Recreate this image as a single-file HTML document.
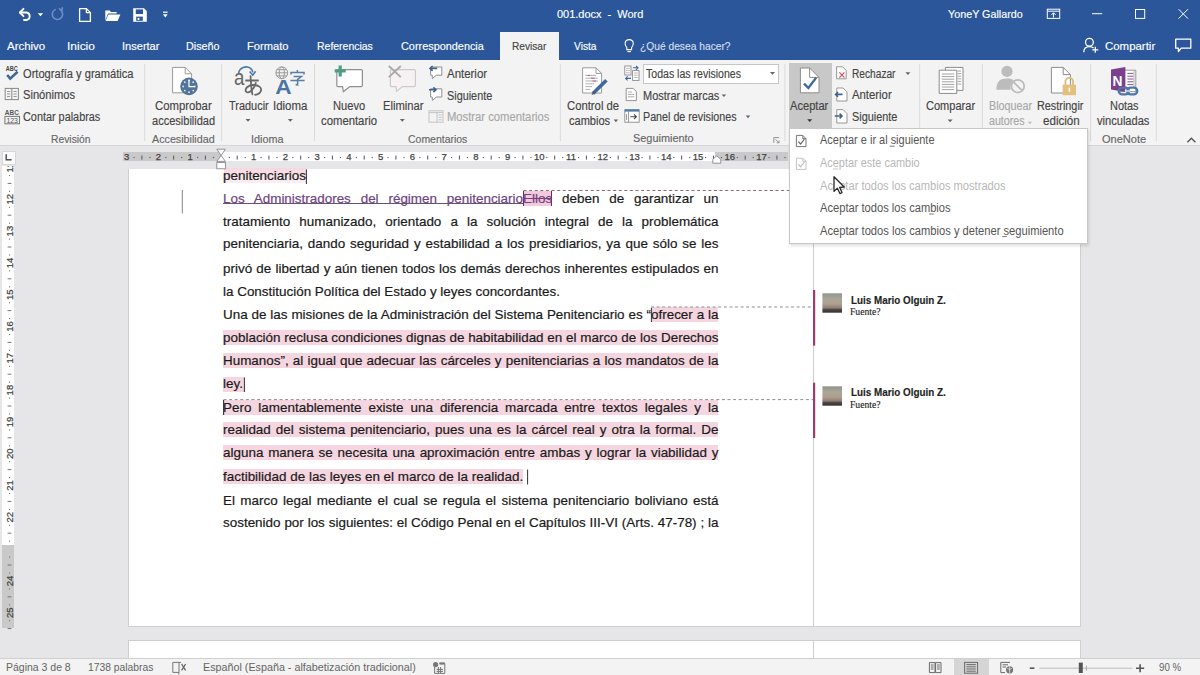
<!DOCTYPE html>
<html><head><meta charset="utf-8">
<style>
*{margin:0;padding:0;box-sizing:border-box}
html,body{width:1200px;height:675px;overflow:hidden;background:#e6e5e8;font-family:"Liberation Sans",sans-serif}
.a{position:absolute;white-space:pre;transform-origin:0 0;-webkit-text-stroke:0.15px currentColor}
.bx{position:absolute}
.ln{position:absolute;left:223px;width:495.5px;white-space:nowrap;font-size:13.45px;line-height:18px;color:#1a1a1a;-webkit-text-stroke:0.2px #1a1a1a}
.j{text-align:justify;text-align-last:justify}
.pk{position:absolute;background:#f5d6e0}
svg.full{position:absolute;left:0;top:0;width:1200px;height:675px}
</style></head><body>
<!-- backgrounds -->
<div class="bx" style="left:0;top:0;width:1200px;height:60px;background:#2b579a"></div>
<div class="bx" style="left:500px;top:32px;width:59px;height:28px;background:#f3f3f3"></div>
<div class="bx" style="left:0;top:60px;width:1200px;height:86px;background:#f3f3f3;border-bottom:1px solid #d6d6d6"></div>
<div class="bx" style="left:788.6px;top:63px;width:43.2px;height:65px;background:#c8c8c8"></div>
<div class="bx" style="left:642.7px;top:63.5px;width:136.5px;height:20.4px;background:#fff;border:1px solid #c6c6c6"></div>
<!-- page -->
<div class="bx" style="left:127.5px;top:168.5px;width:953px;height:458px;background:#fff;border:1px solid #cfcfcf;border-top:none"></div>
<div class="bx" style="left:127.5px;top:639.5px;width:953px;height:20px;background:#fff;border:1px solid #cfcfcf"></div>
<div class="bx" style="left:813px;top:168.5px;width:1px;height:457px;background:#cdcdcd"></div>
<div class="bx" style="left:813px;top:640px;width:1px;height:18px;background:#cdcdcd"></div>
<!-- rulers -->
<div class="bx" style="left:123px;top:152px;width:665px;height:9px;background:#c9c9c9"></div>
<div class="bx" style="left:221px;top:152px;width:494px;height:9px;background:#fff"></div>
<div class="bx" style="left:1.5px;top:150.5px;width:14px;height:14px;background:#fafafa;border:1px solid #d8d8d8"></div>
<div class="bx" style="left:2px;top:166px;width:11.5px;height:462px;background:#c9c9c9"></div>
<div class="bx" style="left:2px;top:166px;width:11.5px;height:379px;background:#fff"></div>
<!-- status -->
<div class="bx" style="left:0;top:658px;width:1200px;height:17px;background:#f3f3f3;border-top:1px solid #cfcfcf"></div>
<div class="bx" style="left:953.5px;top:659px;width:35px;height:16px;background:#d5d5d5"></div>

<div class="pk" style="left:224px;top:168.0px;width:82.5px;height:15px;background:linear-gradient(#f6d7e0,#fbeff3)"></div>
<div class="pk" style="left:651px;top:307.0px;width:67px;height:15px"></div>
<div class="pk" style="left:223px;top:330.0px;width:495px;height:15px"></div>
<div class="pk" style="left:223px;top:353.0px;width:495px;height:15px"></div>
<div class="pk" style="left:223px;top:376.5px;width:21.5px;height:15px"></div>
<div class="pk" style="left:223px;top:400.0px;width:495px;height:15px"></div>
<div class="pk" style="left:223px;top:422.0px;width:495px;height:15px"></div>
<div class="pk" style="left:223px;top:445.0px;width:495px;height:15px"></div>
<div class="pk" style="left:223px;top:469.0px;width:300px;height:15px"></div>
<div class="ln" style="top:166.84px">penitenciarios</div>
<div class="ln j" style="top:189.84px"><span style="color:#6e4580;-webkit-text-stroke-color:#6e4580;text-decoration:underline;text-decoration-color:#6a5078;text-decoration-skip-ink:none;text-underline-offset:0px">Los Administradores del régimen penitenciario</span><span style="color:#6e4580;-webkit-text-stroke-color:#6e4580;text-decoration:line-through;text-decoration-color:#7a3d7c;background:#f3c9dc;box-shadow:inset 1px 0 0 #6a2a5c,inset -1px 0 0 #6a2a5c">Ellos</span> deben de garantizar un</div>
<div class="ln j" style="top:212.84px">tratamiento humanizado, orientado a la solución integral de la problemática</div>
<div class="ln j" style="top:235.34px">penitenciaria, dando seguridad y estabilidad a los presidiarios, ya que sólo se les</div>
<div class="ln j" style="top:259.84px">privó de libertad y aún tienen todos los demás derechos inherentes estipulados en</div>
<div class="ln" style="top:282.84px">la Constitución Política del Estado y leyes concordantes.</div>
<div class="ln j" style="top:305.84px">Una de las misiones de la Administración del Sistema Penitenciario es “ofrecer a la</div>
<div class="ln j" style="top:328.84px">población reclusa condiciones dignas de habitabilidad en el marco de los Derechos</div>
<div class="ln j" style="top:351.84px">Humanos”, al igual que adecuar las cárceles y penitenciarias a los mandatos de la</div>
<div class="ln" style="top:375.34px">ley.</div>
<div class="ln j" style="top:398.84px">Pero lamentablemente existe una diferencia marcada entre textos legales y la</div>
<div class="ln j" style="top:420.84px">realidad del sistema penitenciario, pues una es la cárcel real y otra la formal. De</div>
<div class="ln j" style="top:443.84px">alguna manera se necesita una aproximación entre ambas y lograr la viabilidad y</div>
<div class="ln" style="top:467.84px">factibilidad de las leyes en el marco de la realidad. </div>
<div class="ln j" style="top:491.84px">El marco legal mediante el cual se regula el sistema penitenciario boliviano está</div>
<div class="ln j" style="top:514.34px">sostenido por los siguientes: el Código Penal en el Capítulos III-VI (Arts. 47-78) ; la</div>
<svg class="full" viewBox="0 0 1200 675">
<text x="126.55" y="160" font-family="Liberation Sans" font-size="9.5" fill="#444" stroke="#444" stroke-width="0.25" text-anchor="middle">3</text>
<text x="158.30" y="160" font-family="Liberation Sans" font-size="9.5" fill="#444" stroke="#444" stroke-width="0.25" text-anchor="middle">2</text>
<text x="190.05" y="160" font-family="Liberation Sans" font-size="9.5" fill="#444" stroke="#444" stroke-width="0.25" text-anchor="middle">1</text>
<text x="253.55" y="160" font-family="Liberation Sans" font-size="9.5" fill="#444" stroke="#444" stroke-width="0.25" text-anchor="middle">1</text>
<text x="285.30" y="160" font-family="Liberation Sans" font-size="9.5" fill="#444" stroke="#444" stroke-width="0.25" text-anchor="middle">2</text>
<text x="317.05" y="160" font-family="Liberation Sans" font-size="9.5" fill="#444" stroke="#444" stroke-width="0.25" text-anchor="middle">3</text>
<text x="348.80" y="160" font-family="Liberation Sans" font-size="9.5" fill="#444" stroke="#444" stroke-width="0.25" text-anchor="middle">4</text>
<text x="380.55" y="160" font-family="Liberation Sans" font-size="9.5" fill="#444" stroke="#444" stroke-width="0.25" text-anchor="middle">5</text>
<text x="412.30" y="160" font-family="Liberation Sans" font-size="9.5" fill="#444" stroke="#444" stroke-width="0.25" text-anchor="middle">6</text>
<text x="444.05" y="160" font-family="Liberation Sans" font-size="9.5" fill="#444" stroke="#444" stroke-width="0.25" text-anchor="middle">7</text>
<text x="475.80" y="160" font-family="Liberation Sans" font-size="9.5" fill="#444" stroke="#444" stroke-width="0.25" text-anchor="middle">8</text>
<text x="507.55" y="160" font-family="Liberation Sans" font-size="9.5" fill="#444" stroke="#444" stroke-width="0.25" text-anchor="middle">9</text>
<text x="539.30" y="160" font-family="Liberation Sans" font-size="9.5" fill="#444" stroke="#444" stroke-width="0.25" text-anchor="middle">10</text>
<text x="571.05" y="160" font-family="Liberation Sans" font-size="9.5" fill="#444" stroke="#444" stroke-width="0.25" text-anchor="middle">11</text>
<text x="602.80" y="160" font-family="Liberation Sans" font-size="9.5" fill="#444" stroke="#444" stroke-width="0.25" text-anchor="middle">12</text>
<text x="634.55" y="160" font-family="Liberation Sans" font-size="9.5" fill="#444" stroke="#444" stroke-width="0.25" text-anchor="middle">13</text>
<text x="666.30" y="160" font-family="Liberation Sans" font-size="9.5" fill="#444" stroke="#444" stroke-width="0.25" text-anchor="middle">14</text>
<text x="698.05" y="160" font-family="Liberation Sans" font-size="9.5" fill="#444" stroke="#444" stroke-width="0.25" text-anchor="middle">15</text>
<text x="729.80" y="160" font-family="Liberation Sans" font-size="9.5" fill="#444" stroke="#444" stroke-width="0.25" text-anchor="middle">16</text>
<text x="761.55" y="160" font-family="Liberation Sans" font-size="9.5" fill="#444" stroke="#444" stroke-width="0.25" text-anchor="middle">17</text>
<rect x="133.49" y="156.9" width="1.2" height="1.2" fill="#666"/>
<path d="M141.92 155.6 V159.6" stroke="#555" stroke-width="1"/>
<rect x="149.36" y="156.9" width="1.2" height="1.2" fill="#666"/>
<rect x="165.24" y="156.9" width="1.2" height="1.2" fill="#666"/>
<path d="M173.68 155.6 V159.6" stroke="#555" stroke-width="1"/>
<rect x="181.11" y="156.9" width="1.2" height="1.2" fill="#666"/>
<rect x="196.99" y="156.9" width="1.2" height="1.2" fill="#666"/>
<path d="M205.42 155.6 V159.6" stroke="#555" stroke-width="1"/>
<rect x="212.86" y="156.9" width="1.2" height="1.2" fill="#666"/>
<rect x="228.74" y="156.9" width="1.2" height="1.2" fill="#666"/>
<path d="M237.18 155.6 V159.6" stroke="#555" stroke-width="1"/>
<rect x="244.61" y="156.9" width="1.2" height="1.2" fill="#666"/>
<rect x="260.49" y="156.9" width="1.2" height="1.2" fill="#666"/>
<path d="M268.92 155.6 V159.6" stroke="#555" stroke-width="1"/>
<rect x="276.36" y="156.9" width="1.2" height="1.2" fill="#666"/>
<rect x="292.24" y="156.9" width="1.2" height="1.2" fill="#666"/>
<path d="M300.68 155.6 V159.6" stroke="#555" stroke-width="1"/>
<rect x="308.11" y="156.9" width="1.2" height="1.2" fill="#666"/>
<rect x="323.99" y="156.9" width="1.2" height="1.2" fill="#666"/>
<path d="M332.42 155.6 V159.6" stroke="#555" stroke-width="1"/>
<rect x="339.86" y="156.9" width="1.2" height="1.2" fill="#666"/>
<rect x="355.74" y="156.9" width="1.2" height="1.2" fill="#666"/>
<path d="M364.18 155.6 V159.6" stroke="#555" stroke-width="1"/>
<rect x="371.61" y="156.9" width="1.2" height="1.2" fill="#666"/>
<rect x="387.49" y="156.9" width="1.2" height="1.2" fill="#666"/>
<path d="M395.92 155.6 V159.6" stroke="#555" stroke-width="1"/>
<rect x="403.36" y="156.9" width="1.2" height="1.2" fill="#666"/>
<rect x="419.24" y="156.9" width="1.2" height="1.2" fill="#666"/>
<path d="M427.68 155.6 V159.6" stroke="#555" stroke-width="1"/>
<rect x="435.11" y="156.9" width="1.2" height="1.2" fill="#666"/>
<rect x="450.99" y="156.9" width="1.2" height="1.2" fill="#666"/>
<path d="M459.42 155.6 V159.6" stroke="#555" stroke-width="1"/>
<rect x="466.86" y="156.9" width="1.2" height="1.2" fill="#666"/>
<rect x="482.74" y="156.9" width="1.2" height="1.2" fill="#666"/>
<path d="M491.18 155.6 V159.6" stroke="#555" stroke-width="1"/>
<rect x="498.61" y="156.9" width="1.2" height="1.2" fill="#666"/>
<rect x="514.49" y="156.9" width="1.2" height="1.2" fill="#666"/>
<path d="M522.92 155.6 V159.6" stroke="#555" stroke-width="1"/>
<rect x="530.36" y="156.9" width="1.2" height="1.2" fill="#666"/>
<rect x="546.24" y="156.9" width="1.2" height="1.2" fill="#666"/>
<path d="M554.68 155.6 V159.6" stroke="#555" stroke-width="1"/>
<rect x="562.11" y="156.9" width="1.2" height="1.2" fill="#666"/>
<rect x="577.99" y="156.9" width="1.2" height="1.2" fill="#666"/>
<path d="M586.42 155.6 V159.6" stroke="#555" stroke-width="1"/>
<rect x="593.86" y="156.9" width="1.2" height="1.2" fill="#666"/>
<rect x="609.74" y="156.9" width="1.2" height="1.2" fill="#666"/>
<path d="M618.18 155.6 V159.6" stroke="#555" stroke-width="1"/>
<rect x="625.61" y="156.9" width="1.2" height="1.2" fill="#666"/>
<rect x="641.49" y="156.9" width="1.2" height="1.2" fill="#666"/>
<path d="M649.92 155.6 V159.6" stroke="#555" stroke-width="1"/>
<rect x="657.36" y="156.9" width="1.2" height="1.2" fill="#666"/>
<rect x="673.24" y="156.9" width="1.2" height="1.2" fill="#666"/>
<path d="M681.68 155.6 V159.6" stroke="#555" stroke-width="1"/>
<rect x="689.11" y="156.9" width="1.2" height="1.2" fill="#666"/>
<rect x="704.99" y="156.9" width="1.2" height="1.2" fill="#666"/>
<path d="M713.42 155.6 V159.6" stroke="#555" stroke-width="1"/>
<rect x="720.86" y="156.9" width="1.2" height="1.2" fill="#666"/>
<rect x="736.74" y="156.9" width="1.2" height="1.2" fill="#666"/>
<path d="M745.18 155.6 V159.6" stroke="#555" stroke-width="1"/>
<rect x="752.61" y="156.9" width="1.2" height="1.2" fill="#666"/>
<rect x="768.49" y="156.9" width="1.2" height="1.2" fill="#666"/>
<path d="M776.92 155.6 V159.6" stroke="#555" stroke-width="1"/>
<rect x="784.36" y="156.9" width="1.2" height="1.2" fill="#666"/>
<path d="M216.8 149.2 H225.4 L221.1 155.4 Z M216.8 161.4 H225.4 L221.1 155.4 Z" fill="#fff" stroke="#8a8a8a" stroke-width="0.9"/>
<rect x="216.8" y="162.6" width="8.6" height="6.2" fill="#fff" stroke="#8a8a8a" stroke-width="0.9"/>
<path d="M712.8 163.2 H720.8 V159.4 L716.8 155.8 L712.8 159.4 Z" fill="#fff" stroke="#8a8a8a" stroke-width="0.9"/>
<text x="0" y="0" transform="translate(12.7 199.30) rotate(-90)" font-family="Liberation Sans" font-size="9.5" fill="#444" stroke="#444" stroke-width="0.25" text-anchor="middle">12</text>
<text x="0" y="0" transform="translate(12.7 231.10) rotate(-90)" font-family="Liberation Sans" font-size="9.5" fill="#444" stroke="#444" stroke-width="0.25" text-anchor="middle">13</text>
<text x="0" y="0" transform="translate(12.7 262.90) rotate(-90)" font-family="Liberation Sans" font-size="9.5" fill="#444" stroke="#444" stroke-width="0.25" text-anchor="middle">14</text>
<text x="0" y="0" transform="translate(12.7 294.70) rotate(-90)" font-family="Liberation Sans" font-size="9.5" fill="#444" stroke="#444" stroke-width="0.25" text-anchor="middle">15</text>
<text x="0" y="0" transform="translate(12.7 326.50) rotate(-90)" font-family="Liberation Sans" font-size="9.5" fill="#444" stroke="#444" stroke-width="0.25" text-anchor="middle">16</text>
<text x="0" y="0" transform="translate(12.7 358.30) rotate(-90)" font-family="Liberation Sans" font-size="9.5" fill="#444" stroke="#444" stroke-width="0.25" text-anchor="middle">17</text>
<text x="0" y="0" transform="translate(12.7 390.10) rotate(-90)" font-family="Liberation Sans" font-size="9.5" fill="#444" stroke="#444" stroke-width="0.25" text-anchor="middle">18</text>
<text x="0" y="0" transform="translate(12.7 421.90) rotate(-90)" font-family="Liberation Sans" font-size="9.5" fill="#444" stroke="#444" stroke-width="0.25" text-anchor="middle">19</text>
<text x="0" y="0" transform="translate(12.7 453.70) rotate(-90)" font-family="Liberation Sans" font-size="9.5" fill="#444" stroke="#444" stroke-width="0.25" text-anchor="middle">20</text>
<text x="0" y="0" transform="translate(12.7 485.50) rotate(-90)" font-family="Liberation Sans" font-size="9.5" fill="#444" stroke="#444" stroke-width="0.25" text-anchor="middle">21</text>
<text x="0" y="0" transform="translate(12.7 517.30) rotate(-90)" font-family="Liberation Sans" font-size="9.5" fill="#444" stroke="#444" stroke-width="0.25" text-anchor="middle">22</text>

<text x="0" y="0" transform="translate(12.7 580.90) rotate(-90)" font-family="Liberation Sans" font-size="9.5" fill="#444" stroke="#444" stroke-width="0.25" text-anchor="middle">24</text>
<text x="0" y="0" transform="translate(12.7 612.70) rotate(-90)" font-family="Liberation Sans" font-size="9.5" fill="#444" stroke="#444" stroke-width="0.25" text-anchor="middle">25</text>
<rect x="9" y="174.95" width="1.1" height="1.1" fill="#777"/>
<path d="M7.6 183.40 H11.4" stroke="#777" stroke-width="1"/>
<rect x="9" y="190.85" width="1.1" height="1.1" fill="#777"/>
<rect x="9" y="206.75" width="1.1" height="1.1" fill="#777"/>
<path d="M7.6 215.20 H11.4" stroke="#777" stroke-width="1"/>
<rect x="9" y="222.65" width="1.1" height="1.1" fill="#777"/>
<rect x="9" y="238.55" width="1.1" height="1.1" fill="#777"/>
<path d="M7.6 247.00 H11.4" stroke="#777" stroke-width="1"/>
<rect x="9" y="254.45" width="1.1" height="1.1" fill="#777"/>
<rect x="9" y="270.35" width="1.1" height="1.1" fill="#777"/>
<path d="M7.6 278.80 H11.4" stroke="#777" stroke-width="1"/>
<rect x="9" y="286.25" width="1.1" height="1.1" fill="#777"/>
<rect x="9" y="302.15" width="1.1" height="1.1" fill="#777"/>
<path d="M7.6 310.60 H11.4" stroke="#777" stroke-width="1"/>
<rect x="9" y="318.05" width="1.1" height="1.1" fill="#777"/>
<rect x="9" y="333.95" width="1.1" height="1.1" fill="#777"/>
<path d="M7.6 342.40 H11.4" stroke="#777" stroke-width="1"/>
<rect x="9" y="349.85" width="1.1" height="1.1" fill="#777"/>
<rect x="9" y="365.75" width="1.1" height="1.1" fill="#777"/>
<path d="M7.6 374.20 H11.4" stroke="#777" stroke-width="1"/>
<rect x="9" y="381.65" width="1.1" height="1.1" fill="#777"/>
<rect x="9" y="397.55" width="1.1" height="1.1" fill="#777"/>
<path d="M7.6 406.00 H11.4" stroke="#777" stroke-width="1"/>
<rect x="9" y="413.45" width="1.1" height="1.1" fill="#777"/>
<rect x="9" y="429.35" width="1.1" height="1.1" fill="#777"/>
<path d="M7.6 437.80 H11.4" stroke="#777" stroke-width="1"/>
<rect x="9" y="445.25" width="1.1" height="1.1" fill="#777"/>
<rect x="9" y="461.15" width="1.1" height="1.1" fill="#777"/>
<path d="M7.6 469.60 H11.4" stroke="#777" stroke-width="1"/>
<rect x="9" y="477.05" width="1.1" height="1.1" fill="#777"/>
<rect x="9" y="492.95" width="1.1" height="1.1" fill="#777"/>
<path d="M7.6 501.40 H11.4" stroke="#777" stroke-width="1"/>
<rect x="9" y="508.85" width="1.1" height="1.1" fill="#777"/>
<rect x="9" y="524.75" width="1.1" height="1.1" fill="#777"/>
<path d="M7.6 533.20 H11.4" stroke="#777" stroke-width="1"/>
<rect x="9" y="540.65" width="1.1" height="1.1" fill="#777"/>
<rect x="9" y="556.55" width="1.1" height="1.1" fill="#777"/>
<path d="M7.6 565.00 H11.4" stroke="#777" stroke-width="1"/>
<rect x="9" y="572.45" width="1.1" height="1.1" fill="#777"/>
<rect x="9" y="588.35" width="1.1" height="1.1" fill="#777"/>
<path d="M7.6 596.80 H11.4" stroke="#777" stroke-width="1"/>
<rect x="9" y="604.25" width="1.1" height="1.1" fill="#777"/>
<rect x="9" y="620.15" width="1.1" height="1.1" fill="#777"/>
<path d="M7.6 628.60 H11.4" stroke="#777" stroke-width="1"/>
<path d="M6.2 154.2 V159.8 H11.6" fill="none" stroke="#555" stroke-width="1.5"/>
<path d="M182.3 190 V213.5" stroke="#888" stroke-width="1"/>
<path d="M523.5 190.5 H813" stroke="#8a6a78" stroke-width="1" stroke-dasharray="3 2.6"/>
<path d="M651 307 H813" stroke="#8f8f8f" stroke-width="1" stroke-dasharray="3 2.6"/>
<path d="M223.5 399.6 H813" stroke="#8f8f8f" stroke-width="1" stroke-dasharray="3 2.6"/>
<path d="M306.4 169.5 V184" stroke="#333" stroke-width="1"/>
<path d="M244.4 377.5 V392" stroke="#333" stroke-width="1"/>
<path d="M223.6 400 V415" stroke="#333" stroke-width="1.1"/>
<path d="M651.4 308 V322" stroke="#333" stroke-width="1"/>
<path d="M527.6 469.5 V484.5" stroke="#333" stroke-width="1"/>
<rect x="813" y="290" width="2.2" height="55.6" fill="#a7386a"/>
<rect x="813" y="382.7" width="2.2" height="55.3" fill="#a7386a"/>
<defs><linearGradient id="av" x1="0" y1="0" x2="0" y2="1"><stop offset="0" stop-color="#8f958a"/><stop offset="0.3" stop-color="#a9a79a"/><stop offset="0.55" stop-color="#b29f8c"/><stop offset="0.75" stop-color="#8c8078"/><stop offset="0.85" stop-color="#4a4040"/><stop offset="1" stop-color="#3a3434"/></linearGradient></defs>
<rect x="822.4" y="293.3" width="19.6" height="19.4" fill="url(#av)"/>
<rect x="822.4" y="386.3" width="19.6" height="19.4" fill="url(#av)"/>
<g fill="none" stroke="#777" stroke-width="1"><path d="M172.8 662.4 H179 V672.4 H172.8 Z M179 662.4 H181"/><path d="M181.6 664 L185.6 670.4 M185.6 664 L181.6 670.4" stroke="#666" stroke-width="1.3"/><path d="M178.8 672.4 V674.6" /></g>
<circle cx="435.6" cy="664.6" r="2.6" fill="#777"/>
<g fill="none" stroke="#777" stroke-width="1"><path d="M434.6 667 V673.4 H444.8 V663.4 H439.4"/><path d="M436.6 669.4 H443 M436.6 671.4 H443 M438.4 667 V673 M440.6 667 V673"/></g>
<rect x="439.6" y="662.4" width="5" height="2.2" fill="#777"/>
<g fill="none" stroke="#6a6a6a" stroke-width="1"><path d="M929.4 662.6 H935 V672.6 H929.4 Z M935.6 662.6 H941 V672.6 H935.6 Z"/><path d="M930.8 665 H933.6 M930.8 667 H933.6 M930.8 669 H933.6 M937 665 H939.8 M937 667 H939.8 M937 669 H939.8"/><rect x="964.6" y="662.4" width="13" height="10.8"/><path d="M966.4 664.6 H975.8 M966.4 666.8 H975.8 M966.4 669 H975.8 M966.4 671.2 H975.8"/><path d="M1010 662.4 H1000.8 V672.6 H1005"/><path d="M1002.6 664.8 H1008 M1002.6 667 H1006"/></g>
<circle cx="1009.6" cy="669.8" r="3.6" fill="#777"/><path d="M1007.4 668.4 Q1009.6 670.4 1011.8 668.4 M1009.6 666.4 V673.2" stroke="#eee" stroke-width="0.7" fill="none"/>
<path d="M1029.8 668.2 H1034.4" stroke="#555" stroke-width="1.6"/>
<path d="M1039.4 668.2 H1132.2" stroke="#bbb" stroke-width="1"/>
<path d="M1086.4 665.6 V670.8" stroke="#aaa" stroke-width="1"/>
<rect x="1078.8" y="662.6" width="4" height="10.4" fill="#555"/>
<path d="M1136 668.2 H1144.2 M1140.1 664.2 V672.2" stroke="#555" stroke-width="1.6"/>
<defs><clipPath id="vr"><rect x="0" y="166" width="20" height="470"/></clipPath></defs><g clip-path="url(#vr)"><text x="0" y="0" transform="translate(12.7 167.50) rotate(-90)" font-family="Liberation Sans" font-size="9.5" fill="#444" stroke="#444" stroke-width="0.25" text-anchor="middle">11</text></g>
</svg>

<svg class="full" viewBox="0 0 1200 675">
<!-- ===== title bar icons ===== -->
<g fill="none" stroke="#fff" stroke-width="1.8" stroke-linecap="round" stroke-linejoin="round">
  <path d="M20 12.5 H26.5 A3.8 3.8 0 0 1 26.5 20 H24"/>
  <path d="M23.5 8.8 L19.8 12.5 L23.5 16.2"/>
</g>
<path d="M37.8 13.3 H43.2 L40.5 16.3 Z" fill="#fff"/>
<g fill="none" stroke="#6b8cc4" stroke-width="1.6" stroke-linecap="round">
  <path d="M55.2 9.6 A5.2 5.2 0 1 0 61.6 11.2"/>
  <path d="M59.4 8.5 L61.8 11.2 L62.4 7.8"/>
</g>
<g fill="none" stroke="#fff" stroke-width="1.3" stroke-linejoin="round">
  <path d="M79.6 8.6 H86.4 L90.4 12.6 V21.4 H79.6 Z"/>
  <path d="M86.4 8.6 V12.6 H90.4"/>
</g>
<path d="M133.2 8.2 H144 L146.8 11 V21.8 H133.2 Z" fill="#fff"/>
<path d="M105.3 10.4 H109.6 L111 12 H116.6 V13.6 H108 L105.3 20.5 Z" fill="#fff"/>
<path d="M108.4 14.6 H120.4 L117.6 21 H105.6 Z" fill="#fff"/>
<rect x="135.8" y="9.4" width="7.2" height="4.6" fill="#2b579a"/>
<rect x="136.2" y="16.6" width="6.6" height="4.2" fill="#2b579a"/>
<rect x="137.6" y="17.8" width="1.8" height="2.2" fill="#fff"/>
<path d="M163 12.2 H167.6" stroke="#fff" stroke-width="1.2"/>
<path d="M162.9 14.3 H167.7 L165.3 17.6 Z" fill="#fff"/>
<!-- right controls -->
<g fill="none" stroke="#fff" stroke-width="1">
  <rect x="1047.3" y="9.2" width="12.4" height="9.2"/>
  <path d="M1047.3 11.2 H1059.7"/>
  <path d="M1053.5 17.6 V12.8 M1051.3 15 L1053.5 12.8 L1055.7 15"/>
  <path d="M1092 13.7 H1102.2"/>
  <rect x="1135.5" y="9.5" width="9.2" height="8.9"/>
  <path d="M1178.6 9.2 L1188 18.6 M1188 9.2 L1178.6 18.6"/>
</g>
<!-- bulb -->
<g fill="none" stroke="#fff" stroke-width="1.1">
  <path d="M626.8 47.6 C624.2 45.2 624.3 39.6 629.2 39.6 C634.1 39.6 634.2 45.2 631.6 47.6 V49.6 H626.8 Z"/>
  <path d="M627.4 51.6 H631"/>
</g>
<!-- person + -->
<g fill="none" stroke="#fff" stroke-width="1.3">
  <circle cx="1089.4" cy="42.3" r="3.9"/>
  <path d="M1083.8 52.2 C1083.8 48 1086.2 46.6 1089.4 46.6 C1091.2 46.6 1092.6 47.1 1093.6 48"/>
  <path d="M1095.3 46.8 V52.8 M1092.3 49.8 H1098.3"/>
</g>
<!-- comment icon -->
<path d="M1175.7 39.2 H1190.8 V48.2 H1181.2 L1178.4 51.6 V48.2 H1175.7 Z" fill="none" stroke="#fff" stroke-width="1.3" stroke-linejoin="round"/>

<!-- ===== ribbon separators ===== -->
<g stroke="#dadada" stroke-width="1">
  <path d="M144.7 64 V141 M221.7 64 V141 M314.5 64 V141 M560.3 64 V141 M784.9 64 V141 M919.7 64 V141 M982.4 64 V141 M1090.6 64 V141 M1156.2 64 V141"/>
</g>
<!-- dropdown arrows -->
<g fill="#666">
  <path d="M245.5 119 H250.5 L248 121.8 Z"/>
  <path d="M287.8 119 H292.8 L290.3 121.8 Z"/>
  <path d="M399.8 119 H404.8 L402.3 121.8 Z"/>
  <path d="M613.6 119.6 H618.2 L615.9 122.2 Z"/>
  <path d="M769.9 72 H775.1 L772.5 74.8 Z"/>
  <path d="M721.6 94.4 H726.2 L723.9 97 Z"/>
  <path d="M745.7 115.6 H750.3 L748 118.2 Z"/>
  <path d="M807.2 119.2 H812.2 L809.7 122 Z" fill="#333"/>
  <path d="M905.4 72.2 H910.4 L907.9 75 Z"/>
  <path d="M947.6 119.4 H952.6 L950.1 122.2 Z"/>
  <path d="M1027.8 121.8 H1032 L1029.9 124.2 Z" fill="#bbb"/>
</g>
<!-- dialog launcher Seguimiento -->
<g fill="none" stroke="#888" stroke-width="0.9">
  <path d="M773.8 142.8 V137.6 H779.2"/>
  <path d="M775.6 139.4 L779 142.8 M779 140.6 V142.8 H776.8"/>
</g>
<!-- collapse ribbon ^ -->
<path d="M1187.4 142.2 L1191.4 138.2 L1195.4 142.2" fill="none" stroke="#555" stroke-width="1.4"/>

<!-- ===== Revision group icons ===== -->
<text x="5.8" y="70.8" font-family="Liberation Sans" font-weight="bold" font-size="6.4" fill="#444" textLength="11.8" lengthAdjust="spacingAndGlyphs">ABC</text>
<path d="M7.2 75 L10.2 78.6 L17.6 71.8" fill="none" stroke="#3f6797" stroke-width="2.6" stroke-linejoin="miter"/>
<g fill="none" stroke="#888" stroke-width="1">
  <rect x="5.2" y="88.4" width="13.2" height="11.2"/>
  <path d="M11.8 88.4 V99.6"/>
  <path d="M7 91.5 H10.2 M7 94 H10.2 M7 96.5 H10.2 M13.5 91.5 H16.7 M13.5 94 H16.7 M13.5 96.5 H16.7" stroke="#999"/>
</g>
<text x="4.8" y="115.4" font-family="Liberation Sans" font-weight="bold" font-size="7.6" fill="#555" textLength="14" lengthAdjust="spacingAndGlyphs">ABC</text>
<rect x="4.9" y="116.4" width="14.6" height="7.4" fill="none" stroke="#777" stroke-width="1"/>
<text x="6.4" y="122.6" font-family="Liberation Sans" font-size="6.4" fill="#555" textLength="11.6" lengthAdjust="spacingAndGlyphs">123</text>

<!-- Accesibilidad -->
<path d="M172.6 67.4 H185.2 L191.6 73.8 V92.8 H172.6 Z" fill="#fff" stroke="#9a9a9a" stroke-width="1"/>
<path d="M185.2 67.4 V73.8 H191.6" fill="none" stroke="#9a9a9a" stroke-width="1"/>
<circle cx="189" cy="86.4" r="8.8" fill="#52749a"/>
<g fill="#dfe8f0">
  <circle cx="189" cy="80.6" r="0.9"/><circle cx="193.2" cy="82.2" r="0.9"/><circle cx="194.8" cy="86.4" r="0.9"/><circle cx="193.2" cy="90.6" r="0.9"/>
  <circle cx="189" cy="92.2" r="0.9"/><circle cx="184.8" cy="90.6" r="0.9"/><circle cx="183.2" cy="86.4" r="0.9"/><circle cx="184.8" cy="82.2" r="0.9"/>
</g>
<path d="M189 79.6 V86.6 H195" fill="none" stroke="#fff" stroke-width="1.2"/>

<!-- Traducir -->
<text x="234" y="84.8" font-family="Liberation Sans" font-size="21.5" fill="#666" textLength="10.4" lengthAdjust="spacingAndGlyphs">a</text>
<g fill="none" stroke="#6a6a6a" stroke-width="1.8" stroke-linecap="round">
  <path d="M246 80.5 H258"/>
  <path d="M250.5 76.2 C251 82 251.2 89 252.4 94.4"/>
  <path d="M255.8 83 C254 89 249.6 93.8 246.6 92 C243.8 90.2 247 85.2 252.8 85 C258.8 84.8 261.8 87.6 261 90.6 C260.2 93.4 257.6 94.6 255 94.8"/>
</g>
<path d="M238.6 73.4 C239.4 67.6 246 65.2 250.4 68.2 C252 69.2 252.6 70.8 252.8 72.4" fill="none" stroke="#4f7ba6" stroke-width="1.6"/>
<path d="M249.6 71.4 L252.8 75.2 L255.6 71.2" fill="none" stroke="#4f7ba6" stroke-width="1.6"/>

<!-- Idioma -->
<g fill="none" stroke="#9a9a9a" stroke-width="1">
  <circle cx="281.8" cy="72.8" r="5.9"/>
  <ellipse cx="281.8" cy="72.8" rx="2.6" ry="5.9"/>
  <path d="M275.9 72.8 H287.7 M276.8 69.7 H286.8 M276.8 75.9 H286.8"/>
</g>
<text x="275.2" y="94" font-family="Liberation Sans" font-weight="bold" font-size="21" fill="#4c75a3" textLength="16.4" lengthAdjust="spacingAndGlyphs">A</text>
<g fill="none" stroke="#5a7ea6" stroke-width="1.5">
  <path d="M297.4 70 V72 M291 74.5 V72.6 H304 V74.5 M293.6 76.6 H301.4 L297.6 79.4 V85 L295.6 84.6 M290.4 80.6 H304.6"/>
</g>

<!-- Nuevo comentario -->
<path d="M338 69.6 H361.2 Q362.4 69.6 362.4 70.8 V85.4 Q362.4 86.6 361.2 86.6 H350 L343.4 91.6 L342.6 86.6 H338 Q336.8 86.6 336.8 85.4 V70.8 Q336.8 69.6 338 69.6 Z" fill="#fff" stroke="#8f8f8f" stroke-width="1.2"/>
<path d="M340.2 65.4 V76.4 M334.7 70.9 H345.7" stroke="#4e9c83" stroke-width="3.2"/>
<!-- Eliminar faded -->
<path d="M391.6 69.6 H414.2 Q415.4 69.6 415.4 70.8 V85.4 Q415.4 86.6 414.2 86.6 H402.4 L396.6 91.4 L396 86.6 H391.6 Q390.4 86.6 390.4 85.4 V70.8 Q390.4 69.6 391.6 69.6 Z" fill="#f6f2f4" stroke="#cbcbcb" stroke-width="1.2"/>
<path d="M388.8 66 L400.8 77.2 M400.8 66 L388.8 77.2" stroke="#a9a9a9" stroke-width="1.8"/>
<!-- Anterior / Siguiente comment -->
<g fill="#fff" stroke="#8f8f8f" stroke-width="1">
  <path d="M430.6 67 H441.8 V75.2 H436.2 L432.4 78.6 L432.2 75.2 H430.6 Z"/>
  <path d="M430.6 88.8 H441.8 V97 H436.2 L432.4 100.4 L432.2 97 H430.6 Z"/>
</g>
<g fill="none" stroke="#41648f" stroke-width="1.6">
  <path d="M437.2 68.4 H430 M432.6 66 L430 68.4 L432.6 70.8"/>
  <path d="M429 89.8 H436 M433.4 87.4 L436 89.8 L433.4 92.2"/>
</g>
<!-- Mostrar comentarios faded -->
<g fill="none" stroke="#c4c4c4" stroke-width="1">
  <rect x="429" y="110.8" width="14" height="11.4"/>
  <path d="M429 112.6 H443 M437 112.6 V122.2 M438.6 115 H441.6 M438.6 117.4 H441.6 M438.6 119.8 H441.6"/>
</g>

<!-- Control de cambios -->
<path d="M582.6 67.8 H596 L601.6 73.4 V93 H582.6 Z" fill="#fff" stroke="#9a9a9a" stroke-width="1"/>
<path d="M596 67.8 V73.4 H601.6" fill="none" stroke="#9a9a9a" stroke-width="1"/>
<g stroke="#999" stroke-width="0.8">
  <path d="M585.4 75.4 H596 M585.4 78.2 H597.6 M585.4 81 H598 M585.4 83.8 H594 M585.4 86.6 H592 M585.4 89.4 H590"/>
</g>
<path d="M587.6 75.4 H590 M591 78.2 H594.6 M592.6 81 H596" stroke="#c05068" stroke-width="0.9"/>
<path d="M593 93.6 L606.4 80.2" stroke="#3f68a0" stroke-width="3.6"/>
<path d="M591.4 95.2 L593.4 91.4 L595.2 93.2 Z" fill="#555"/>
<!-- compare small -->
<g fill="#fff" stroke="#8a8a8a" stroke-width="0.9">
  <rect x="624.8" y="66" width="6.2" height="9"/>
  <rect x="632.6" y="70.6" width="6.4" height="9.8"/>
</g>
<path d="M626 68.4 H629.8 M626 70.6 H629.8 M626 72.8 H629.8 M634 73 H637.6 M634 75.2 H637.6 M634 77.4 H637.6" stroke="#888" stroke-width="0.6"/>
<path d="M633 67.8 H638 M636 65.8 L638 67.8 L636 69.8 M631 78.4 H625.6 M627.6 76.4 L625.6 78.4 L627.6 80.4" fill="none" stroke="#3f68a0" stroke-width="1.1"/>
<!-- mostrar marcas -->
<path d="M626.2 88.4 H633.2 L636.4 91.6 V100.6 H626.2 Z" fill="#fff" stroke="#8a8a8a" stroke-width="0.9"/>
<path d="M628 92 H632 M628 94.4 H634.4 M628 96.8 H634.4" stroke="#999" stroke-width="0.8"/>
<!-- panel de revisiones -->
<rect x="624.8" y="109.8" width="14.4" height="12.4" fill="#fff" stroke="#8a8a8a" stroke-width="0.9"/>
<rect x="624.8" y="109.4" width="14.4" height="2.2" fill="#4d78aa"/>
<path d="M628.6 111.6 V122.2 M626.6 114 V120" stroke="#8a8a8a" stroke-width="0.9"/>
<path d="M630.4 116.8 H636.4 M634 114.4 L636.4 116.8 L634 119.2" fill="none" stroke="#444" stroke-width="1.1"/>

<!-- Aceptar -->
<path d="M800.4 68 H809.6 L819 77.4 V92.8 H800.4 Z" fill="#fff" stroke="#8d8d8d" stroke-width="1"/>
<path d="M809.6 68 V77.4 H819" fill="none" stroke="#8d8d8d" stroke-width="1"/>
<path d="M804 83.6 L808.4 88 L816.2 77.6" fill="none" stroke="#3f6a9b" stroke-width="2.4"/>
<!-- Rechazar / Anterior / Siguiente docs -->
<g fill="#fff" stroke="#8d8d8d" stroke-width="0.9">
  <path d="M836.6 66.8 H842.6 L846.2 70.4 V78.8 H836.6 Z"/>
  <path d="M836.8 88 H843 L847 92 V101 H836.8 Z"/>
  <path d="M836.8 109.6 H843 L847 113.6 V123 H836.8 Z"/>
</g>
<path d="M839.4 72.4 L844.4 77.6 M844.4 72.4 L839.4 77.6" stroke="#c84a5a" stroke-width="1.1"/>
<g fill="none" stroke="#41648f" stroke-width="1.6">
  <path d="M842.6 94.4 H835.6 M838 92 L835.6 94.4 L838 96.8"/>
  <path d="M834.8 116 H842 M839.6 113.6 L842 116 L839.6 118.4"/>
</g>

<!-- Comparar -->
<path d="M945.4 67.4 H963 V90.4 H945.4 Z" fill="#fff" stroke="#8a8a8a" stroke-width="1"/>
<path d="M939.2 70.2 H956.8 V93.4 H939.2 Z" fill="#fff" stroke="#8a8a8a" stroke-width="1"/>
<path d="M941.8 74 H954.2 M941.8 76.6 H954.2 M941.8 79.2 H954.2 M941.8 81.8 H954.2 M941.8 84.4 H954.2 M941.8 87 H954.2 M941.8 89.6 H954.2 M957.6 71 H961.2 M957.6 73.6 H961.2 M957.6 76.2 H961.2 M957.6 78.8 H961.2 M957.6 81.4 H961.2 M957.6 84 H961.2" stroke="#8a8a8a" stroke-width="0.8"/>

<!-- Bloquear autores faded -->
<circle cx="1007" cy="71.4" r="5.6" fill="#bcbcbc"/>
<path d="M996.4 89.8 C996.4 81 1000 78.4 1007 78.4 C1010 78.4 1012.4 79 1013.8 80.4 C1011 82 1010.4 85 1010.6 89.8 Z" fill="#bcbcbc"/>
<circle cx="1017.8" cy="86.2" r="6.4" fill="#f3f3f3" stroke="#bcbcbc" stroke-width="1.8"/>
<path d="M1013.4 81.8 L1022.2 90.6" stroke="#bcbcbc" stroke-width="1.8"/>

<!-- Restringir edicion -->
<path d="M1051.4 67.4 H1063.2 L1070.4 74.6 V93 H1051.4 Z" fill="#fff" stroke="#8d8d8d" stroke-width="1"/>
<path d="M1063.2 67.4 V74.6 H1070.4" fill="none" stroke="#8d8d8d" stroke-width="1"/>
<path d="M1065.4 85 V81.6 A3.8 3.8 0 0 1 1073 81.6 V85" fill="none" stroke="#dcbb78" stroke-width="1.8"/>
<rect x="1062.6" y="84.6" width="13.4" height="10.6" fill="#e3c07e"/>
<rect x="1068.6" y="87.6" width="1.6" height="4" fill="#fff"/>

<!-- OneNote -->
<path d="M1120 70.2 H1135.8 V91.6 H1120 Z" fill="#fff" stroke="#8d8d8d" stroke-width="0.9"/>
<path d="M1127.4 73.4 H1133.4 M1127.4 76.2 H1133.4 M1127.4 79 H1133.4 M1127.4 81.8 H1133.4 M1127.4 84.6 H1133.4" stroke="#7a3a8a" stroke-width="0.9"/>
<path d="M1134 71 V88" stroke="#aaa" stroke-width="0.9"/>
<path d="M1111 69.6 L1125.4 67 V92 L1111 89.4 Z" fill="#7b3f8e"/>
<text x="1112.6" y="85.8" font-family="Liberation Sans" font-weight="bold" font-size="14" fill="#fff" textLength="10" lengthAdjust="spacingAndGlyphs">N</text>
<g fill="none" stroke="#4a78a8" stroke-width="2.4">
  <rect x="1118.8" y="87.6" width="10" height="6.8" rx="3.4"/>
  <rect x="1127.2" y="87.6" width="10" height="6.8" rx="3.4"/>
</g>
<path d="M1124.8 91 H1130.2" stroke="#fff" stroke-width="1.2"/>

</svg>

<span class="a" style="left:556.80px;top:7.42px;font-size:11.5px;line-height:14px;color:#ffffff;font-weight:normal;font-family:'Liberation Sans';transform:scaleX(0.9539);">001.docx  -  Word</span>
<span class="a" style="left:948.20px;top:7.42px;font-size:11.5px;line-height:14px;color:#ffffff;font-weight:normal;font-family:'Liberation Sans';transform:scaleX(0.9355);">YoneY Gallardo</span>
<span class="a" style="left:7.30px;top:39.35px;font-size:11.7px;line-height:14px;color:#ffffff;font-weight:normal;font-family:'Liberation Sans';transform:scaleX(0.9805);">Archivo</span>
<span class="a" style="left:67.28px;top:39.35px;font-size:11.7px;line-height:14px;color:#ffffff;font-weight:normal;font-family:'Liberation Sans';transform:scaleX(1.0230);">Inicio</span>
<span class="a" style="left:121.76px;top:39.35px;font-size:11.7px;line-height:14px;color:#ffffff;font-weight:normal;font-family:'Liberation Sans';transform:scaleX(0.9450);">Insertar</span>
<span class="a" style="left:186.00px;top:39.35px;font-size:11.7px;line-height:14px;color:#ffffff;font-weight:normal;font-family:'Liberation Sans';transform:scaleX(0.9219);">Diseño</span>
<span class="a" style="left:247.30px;top:39.35px;font-size:11.7px;line-height:14px;color:#ffffff;font-weight:normal;font-family:'Liberation Sans';transform:scaleX(0.9542);">Formato</span>
<span class="a" style="left:316.70px;top:39.35px;font-size:11.7px;line-height:14px;color:#ffffff;font-weight:normal;font-family:'Liberation Sans';transform:scaleX(0.8957);">Referencias</span>
<span class="a" style="left:401.00px;top:39.35px;font-size:11.7px;line-height:14px;color:#ffffff;font-weight:normal;font-family:'Liberation Sans';transform:scaleX(0.9306);">Correspondencia</span>
<span class="a" style="left:573.70px;top:39.35px;font-size:11.7px;line-height:14px;color:#ffffff;font-weight:normal;font-family:'Liberation Sans';transform:scaleX(0.8755);">Vista</span>
<span class="a" style="left:1104.70px;top:39.35px;font-size:11.7px;line-height:14px;color:#ffffff;font-weight:normal;font-family:'Liberation Sans';transform:scaleX(0.9784);">Compartir</span>
<span class="a" style="left:512.30px;top:39.35px;font-size:11.7px;line-height:14px;color:#444;font-weight:normal;font-family:'Liberation Sans';transform:scaleX(0.8660);">Revisar</span>
<span class="a" style="left:640.00px;top:39.35px;font-size:11.7px;line-height:14px;color:#d4def0;font-weight:normal;font-family:'Liberation Sans';transform:scaleX(0.8767);">¿Qué desea hacer?</span>
<span class="a" style="left:22.90px;top:67.04px;font-size:12px;line-height:14px;color:#444444;font-weight:normal;font-family:'Liberation Sans';transform:scaleX(0.9256);">Ortografía y gramática</span>
<span class="a" style="left:22.70px;top:88.34px;font-size:12px;line-height:14px;color:#444444;font-weight:normal;font-family:'Liberation Sans';transform:scaleX(0.9281);">Sinónimos</span>
<span class="a" style="left:22.70px;top:110.14px;font-size:12px;line-height:14px;color:#444444;font-weight:normal;font-family:'Liberation Sans';transform:scaleX(0.9053);">Contar palabras</span>
<span class="a" style="left:51.30px;top:131.55px;font-size:11.7px;line-height:14px;color:#666666;font-weight:normal;font-family:'Liberation Sans';transform:scaleX(0.8822);">Revisión</span>
<span class="a" style="left:155.00px;top:98.64px;font-size:12px;line-height:14px;color:#444444;font-weight:normal;font-family:'Liberation Sans';transform:scaleX(0.9446);">Comprobar</span>
<span class="a" style="left:151.70px;top:113.94px;font-size:12px;line-height:14px;color:#444444;font-weight:normal;font-family:'Liberation Sans';transform:scaleX(0.9187);">accesibilidad</span>
<span class="a" style="left:152.00px;top:131.75px;font-size:11.7px;line-height:14px;color:#666666;font-weight:normal;font-family:'Liberation Sans';transform:scaleX(0.9186);">Accesibilidad</span>
<span class="a" style="left:228.50px;top:98.64px;font-size:12px;line-height:14px;color:#444444;font-weight:normal;font-family:'Liberation Sans';transform:scaleX(0.9112);">Traducir</span>
<span class="a" style="left:272.55px;top:98.64px;font-size:12px;line-height:14px;color:#444444;font-weight:normal;font-family:'Liberation Sans';transform:scaleX(0.9535);">Idioma</span>
<span class="a" style="left:250.77px;top:131.75px;font-size:11.7px;line-height:14px;color:#666666;font-weight:normal;font-family:'Liberation Sans';transform:scaleX(0.9254);">Idioma</span>
<span class="a" style="left:333.40px;top:98.84px;font-size:12px;line-height:14px;color:#444444;font-weight:normal;font-family:'Liberation Sans';transform:scaleX(0.9282);">Nuevo</span>
<span class="a" style="left:321.30px;top:114.04px;font-size:12px;line-height:14px;color:#444444;font-weight:normal;font-family:'Liberation Sans';transform:scaleX(0.9432);">comentario</span>
<span class="a" style="left:382.60px;top:98.84px;font-size:12px;line-height:14px;color:#444444;font-weight:normal;font-family:'Liberation Sans';transform:scaleX(0.9343);">Eliminar</span>
<span class="a" style="left:446.50px;top:67.24px;font-size:12px;line-height:14px;color:#444444;font-weight:normal;font-family:'Liberation Sans';transform:scaleX(0.9543);">Anterior</span>
<span class="a" style="left:446.50px;top:88.84px;font-size:12px;line-height:14px;color:#444444;font-weight:normal;font-family:'Liberation Sans';transform:scaleX(0.9034);">Siguiente</span>
<span class="a" style="left:446.50px;top:110.14px;font-size:12px;line-height:14px;color:#a8a8a8;font-weight:normal;font-family:'Liberation Sans';transform:scaleX(0.9372);">Mostrar comentarios</span>
<span class="a" style="left:407.50px;top:132.35px;font-size:11.7px;line-height:14px;color:#666666;font-weight:normal;font-family:'Liberation Sans';transform:scaleX(0.8959);">Comentarios</span>
<span class="a" style="left:566.80px;top:99.44px;font-size:12px;line-height:14px;color:#444444;font-weight:normal;font-family:'Liberation Sans';transform:scaleX(0.9409);">Control de</span>
<span class="a" style="left:569.10px;top:114.04px;font-size:12px;line-height:14px;color:#444444;font-weight:normal;font-family:'Liberation Sans';transform:scaleX(0.9198);">cambios</span>
<span class="a" style="left:646.00px;top:67.04px;font-size:12px;line-height:14px;color:#444444;font-weight:normal;font-family:'Liberation Sans';transform:scaleX(0.8792);">Todas las revisiones</span>
<span class="a" style="left:642.70px;top:88.64px;font-size:12px;line-height:14px;color:#444444;font-weight:normal;font-family:'Liberation Sans';transform:scaleX(0.9155);">Mostrar marcas</span>
<span class="a" style="left:642.70px;top:110.14px;font-size:12px;line-height:14px;color:#444444;font-weight:normal;font-family:'Liberation Sans';transform:scaleX(0.8928);">Panel de revisiones</span>
<span class="a" style="left:633.30px;top:131.45px;font-size:11.7px;line-height:14px;color:#666666;font-weight:normal;font-family:'Liberation Sans';transform:scaleX(0.9332);">Seguimiento</span>
<span class="a" style="left:790.40px;top:99.04px;font-size:12px;line-height:14px;color:#444444;font-weight:normal;font-family:'Liberation Sans';transform:scaleX(0.9260);">Aceptar</span>
<span class="a" style="left:852.40px;top:67.04px;font-size:12px;line-height:14px;color:#444444;font-weight:normal;font-family:'Liberation Sans';transform:scaleX(0.8469);">Rechazar</span>
<span class="a" style="left:852.40px;top:88.34px;font-size:12px;line-height:14px;color:#444444;font-weight:normal;font-family:'Liberation Sans';transform:scaleX(0.9448);">Anterior</span>
<span class="a" style="left:852.40px;top:109.74px;font-size:12px;line-height:14px;color:#444444;font-weight:normal;font-family:'Liberation Sans';transform:scaleX(0.9074);">Siguiente</span>
<span class="a" style="left:925.90px;top:99.44px;font-size:12px;line-height:14px;color:#444444;font-weight:normal;font-family:'Liberation Sans';transform:scaleX(0.9203);">Comparar</span>
<span class="a" style="left:988.60px;top:99.44px;font-size:12px;line-height:14px;color:#a8a8a8;font-weight:normal;font-family:'Liberation Sans';transform:scaleX(0.8951);">Bloquear</span>
<span class="a" style="left:988.60px;top:114.24px;font-size:12px;line-height:14px;color:#a8a8a8;font-weight:normal;font-family:'Liberation Sans';transform:scaleX(0.8894);">autores</span>
<span class="a" style="left:1037.30px;top:99.44px;font-size:12px;line-height:14px;color:#444444;font-weight:normal;font-family:'Liberation Sans';transform:scaleX(0.9036);">Restringir</span>
<span class="a" style="left:1042.70px;top:114.24px;font-size:12px;line-height:14px;color:#444444;font-weight:normal;font-family:'Liberation Sans';transform:scaleX(0.9664);">edición</span>
<span class="a" style="left:1109.50px;top:99.44px;font-size:12px;line-height:14px;color:#444444;font-weight:normal;font-family:'Liberation Sans';transform:scaleX(0.9092);">Notas</span>
<span class="a" style="left:1097.20px;top:114.24px;font-size:12px;line-height:14px;color:#444444;font-weight:normal;font-family:'Liberation Sans';transform:scaleX(0.9241);">vinculadas</span>
<span class="a" style="left:1101.70px;top:132.05px;font-size:11.7px;line-height:14px;color:#666666;font-weight:normal;font-family:'Liberation Sans';transform:scaleX(0.9443);">OneNote</span>
<span class="a" style="left:850.70px;top:294.84px;font-size:10px;line-height:12px;color:#1e1e1e;font-weight:bold;font-family:'Liberation Sans';transform:scaleX(0.9852);">Luis Mario Olguin Z.</span>
<span class="a" style="left:850.40px;top:306.36px;font-size:10.5px;line-height:12px;color:#222;font-weight:normal;font-family:'Liberation Serif';transform:scaleX(0.9203);">Fuente?</span>
<span class="a" style="left:850.70px;top:387.14px;font-size:10px;line-height:12px;color:#1e1e1e;font-weight:bold;font-family:'Liberation Sans';transform:scaleX(0.9852);">Luis Mario Olguin Z.</span>
<span class="a" style="left:850.40px;top:398.66px;font-size:10.5px;line-height:12px;color:#222;font-weight:normal;font-family:'Liberation Serif';transform:scaleX(0.9203);">Fuente?</span>
<span class="a" style="left:5.60px;top:661.22px;font-size:11.2px;line-height:13px;color:#646464;font-weight:normal;font-family:'Liberation Sans';transform:scaleX(0.9371);-webkit-text-stroke:0;">Página 3 de 8</span>
<span class="a" style="left:88.00px;top:661.22px;font-size:11.2px;line-height:13px;color:#646464;font-weight:normal;font-family:'Liberation Sans';transform:scaleX(0.9212);-webkit-text-stroke:0;">1738 palabras</span>
<span class="a" style="left:202.50px;top:661.22px;font-size:11.2px;line-height:13px;color:#646464;font-weight:normal;font-family:'Liberation Sans';transform:scaleX(0.9609);-webkit-text-stroke:0;">Español (España - alfabetización tradicional)</span>
<span class="a" style="left:1158.90px;top:661.22px;font-size:11.2px;line-height:13px;color:#646464;font-weight:normal;font-family:'Liberation Sans';transform:scaleX(0.8688);-webkit-text-stroke:0;">90 %</span>

<div class="bx" style="left:788.7px;top:127.8px;width:299px;height:116px;background:#fff;border:1px solid #c8c8c8;box-shadow:1px 2px 3px rgba(0,0,0,0.12)"></div>
<svg class="full" viewBox="0 0 1200 675">
<g fill="#fff" stroke="#777" stroke-width="1">
  <path d="M796.4 135.4 H802.8 L806 138.6 V146.6 H796.4 Z"/>
</g>
<path d="M802.8 135.4 V138.6 H806" fill="none" stroke="#777" stroke-width="1"/>
<path d="M798.4 141.6 L800.6 144 L804.4 139.2" fill="none" stroke="#666" stroke-width="1.2"/>
<g fill="#fff" stroke="#c4c4c4" stroke-width="1">
  <path d="M796.4 158.2 H802.8 L806 161.4 V169.4 H796.4 Z"/>
</g>
<path d="M802.8 158.2 V161.4 H806" fill="none" stroke="#c4c4c4" stroke-width="1"/>
<path d="M798.4 164.4 L800.6 166.8 L804.4 162" fill="none" stroke="#bbb" stroke-width="1.2"/>
<!-- accelerator underlines -->
<path d="M889.8 146.2 H894.6" stroke="#555" stroke-width="0.8"/>
<path d="M833 169 H838" stroke="#bbb" stroke-width="0.8"/>
<path d="M929.2 214 H933.6" stroke="#555" stroke-width="0.8"/>
<path d="M1002.2 236.6 H1006.8" stroke="#555" stroke-width="0.8"/>

</svg>
<span class="a" style="left:819.80px;top:133.34px;font-size:12px;line-height:14px;color:#555555;font-weight:normal;font-family:'Liberation Sans';transform:scaleX(0.9131);-webkit-text-stroke:0;">Aceptar e ir al siguiente</span>
<span class="a" style="left:819.80px;top:156.14px;font-size:12px;line-height:14px;color:#b8b8b8;font-weight:normal;font-family:'Liberation Sans';transform:scaleX(0.9115);-webkit-text-stroke:0;">Aceptar este cambio</span>
<span class="a" style="left:819.80px;top:178.84px;font-size:12px;line-height:14px;color:#b8b8b8;font-weight:normal;font-family:'Liberation Sans';transform:scaleX(0.9271);-webkit-text-stroke:0;">Aceptar todos los cambios mostrados</span>
<span class="a" style="left:819.80px;top:201.14px;font-size:12px;line-height:14px;color:#555555;font-weight:normal;font-family:'Liberation Sans';transform:scaleX(0.9280);-webkit-text-stroke:0;">Aceptar todos los cambios</span>
<span class="a" style="left:819.80px;top:223.74px;font-size:12px;line-height:14px;color:#555555;font-weight:normal;font-family:'Liberation Sans';transform:scaleX(0.9293);-webkit-text-stroke:0;">Aceptar todos los cambios y detener seguimiento</span>
<svg class="full" viewBox="0 0 1200 675"><path d="M834 176.8 V191.4 L837.4 188.2 L839.9 193.6 L842 192.6 L839.6 187.3 L844.2 187 Z" fill="#fff" stroke="#2a2a2a" stroke-width="1.3" stroke-linejoin="round"/></svg>
</body></html>
